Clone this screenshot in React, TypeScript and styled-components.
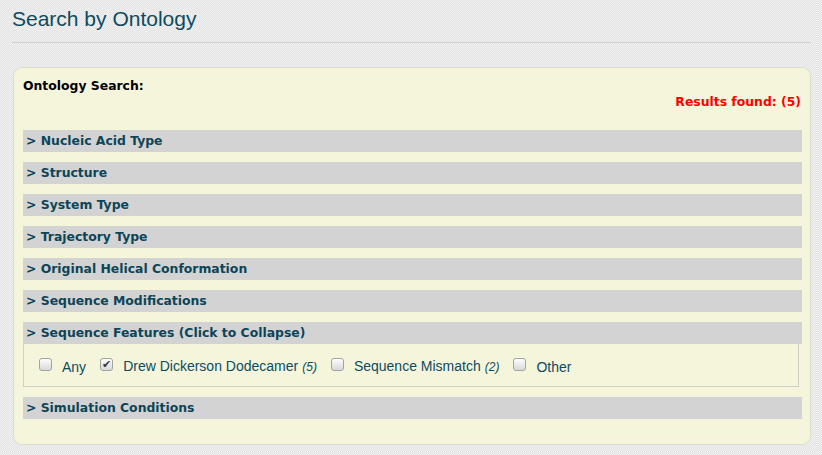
import React from "react";
import styled, { createGlobalStyle } from "styled-components";

const GlobalStyle = createGlobalStyle`
  html, body {
    margin: 0;
    padding: 0;
  }
  body {
    background-color: #ebebeb;
    background-image: repeating-conic-gradient(#e3e3e3 0 25%, #f1f1f1 0 50%);
    background-size: 2px 2px;
    font-family: "DejaVu Sans", Verdana, sans-serif;
  }
`;

const Page = styled.div`
  width: 822px;
  min-height: 455px;
  box-sizing: border-box;
  padding: 6px 11px 10px 13px;
`;

const Title = styled.h1`
  margin: 0 0 0 -1px;
  font-family: "Liberation Sans", Arial, sans-serif;
  font-weight: normal;
  font-size: 21px;
  line-height: 26px;
  color: #0d4b5e;
`;

const Rule = styled.div`
  height: 1px;
  margin: 10px 0 0 -1px;
  background: #cfcfcf;
`;

const Panel = styled.section`
  margin-top: 24px;
  box-sizing: border-box;
  width: 798px;
  height: 378px;
  padding: 10px 8px 15px 9px;
  background: #f5f5dc;
  border: 1px solid #dcdcd2;
  border-radius: 9px;
`;

const PanelLabel = styled.div`
  font-size: 12.4px;
  line-height: 16px;
  font-weight: bold;
  color: #000;
`;

const Results = styled.div`
  font-size: 12.4px;
  line-height: 16px;
  font-weight: bold;
  color: #ff0000;
  text-align: right;
  margin-right: 1px;
  margin-bottom: 20px;
`;

const Section = styled.div`
  margin-bottom: 10px;
`;

const Bar = styled.div`
  height: 22px;
  line-height: 22px;
  padding-left: 3px;
  background: #d3d3d3;
  font-size: 12.4px;
  font-weight: bold;
  color: #0b4557;
  cursor: pointer;
`;

const Body = styled.div`
  margin-right: 3px;
  border: 1px solid #cfcfc6;
  border-top: none;
  padding: 14px 15px 10px;
  display: flex;
  align-items: flex-end;
  gap: 14px;
`;

const Option = styled.label`
  display: flex;
  align-items: flex-end;
  gap: 10px;
  font-family: "Liberation Sans", Arial, sans-serif;
  font-size: 14px;
  line-height: 17px;
  color: #0d4b5e;
`;

const Box = styled.span<{ $checked?: boolean }>`
  width: 11px;
  height: 11px;
  margin-bottom: 5px;
  border: 1px solid #a2a2a2;
  border-radius: 3px;
  background: linear-gradient(#fdfdfd, #d9d9d9);
  box-shadow: inset 0 1px 0 #fff;
  flex: none;
  color: #3a3a3a;
  font-size: 11px;
  line-height: 11px;
  text-align: center;
  font-family: "DejaVu Sans", sans-serif;
`;

const Count = styled.em`
  font-size: 12px;
  margin-left: 4px;
`;

const sections = [
  "Nucleic Acid Type",
  "Structure",
  "System Type",
  "Trajectory Type",
  "Original Helical Conformation",
  "Sequence Modifications",
];

const options = [
  { label: "Any", checked: false },
  { label: "Drew Dickerson Dodecamer", count: 5, checked: true },
  { label: "Sequence Mismatch", count: 2, checked: false },
  { label: "Other", checked: false },
];

export default function App() {
  return (
    <>
      <GlobalStyle />
      <Page>
        <Title>Search by Ontology</Title>
        <Rule />
        <Panel>
          <PanelLabel>Ontology Search:</PanelLabel>
          <Results>Results found: (5)</Results>
          {sections.map((s) => (
            <Section key={s}>
              <Bar>&gt; {s}</Bar>
            </Section>
          ))}
          <Section>
            <Bar>&gt; Sequence Features (Click to Collapse)</Bar>
            <Body>
              {options.map((o) => (
                <Option key={o.label}>
                  <Box $checked={o.checked}>{o.checked ? "✔" : ""}</Box>
                  <span>
                    {o.label}
                    {o.count !== undefined && <Count>({o.count})</Count>}
                  </span>
                </Option>
              ))}
            </Body>
          </Section>
          <Section>
            <Bar>&gt; Simulation Conditions</Bar>
          </Section>
        </Panel>
      </Page>
    </>
  );
}
